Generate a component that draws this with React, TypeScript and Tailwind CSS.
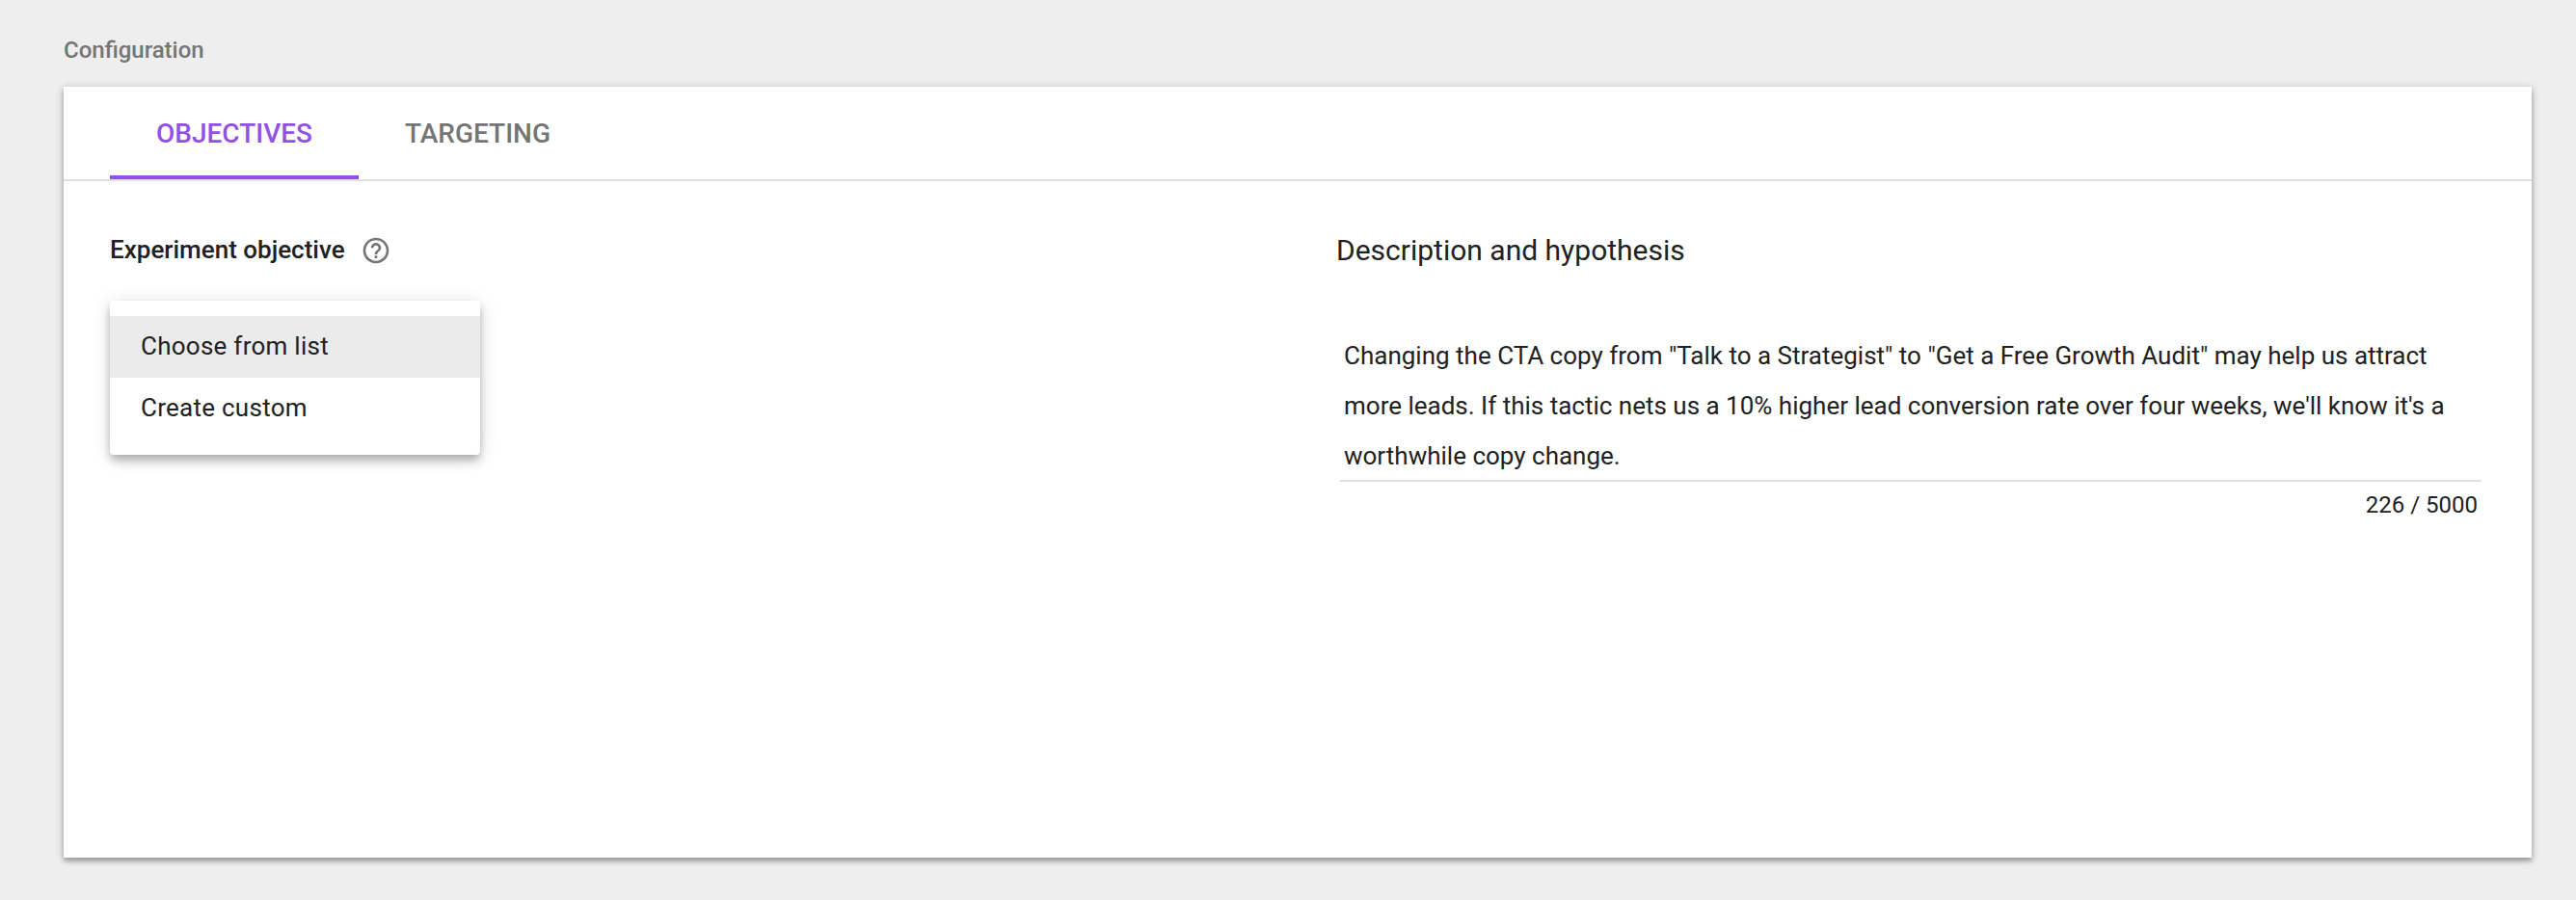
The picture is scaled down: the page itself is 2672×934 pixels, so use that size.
export default function App() {
  return (
    <div className="h-[934px] w-[2672px] bg-[#eeeeee] px-[66px] pt-[36px] font-['Roboto',sans-serif] text-[#212121]">
      <div className="mb-[22px] h-[32px] text-[24px] leading-[32px] font-medium text-[#757575]">Configuration</div>
      <div className="h-[800px] w-[2560px] bg-white shadow-[0_2px_8px_rgba(0,0,0,0.28),0_4px_4px_rgba(0,0,0,0.18)]">
        <nav className="flex h-[98px] border-b-2 border-[#e0e0e0] pl-[48px] text-[28px] leading-[98px] font-medium">
          <div className="h-[96px] w-[258px] border-b-4 border-[#9251e5] text-center text-[#9251e5]">OBJECTIVES</div>
          <div className="w-[247px] text-center text-[#757575]">TARGETING</div>
        </nav>
        <main className="flex pl-[48px]">
          <section className="w-[1272px] pt-[56px]">
            <div className="flex h-[32px] items-center gap-[16px]">
              <h2 className="pb-[2px] text-[26px] leading-[32px] font-medium">Experiment objective</h2>
              <svg className="size-[32px]" viewBox="0 0 24 24" fill="#757575"><path d="M11 18h2v-2h-2v2zm1-16C6.480 2 2 6.480 2 12s4.480 10 10 10 10-4.480 10-10S17.520 2 12 2zm0 18c-4.410 0-8-3.590-8-8s3.590-8 8-8 8 3.590 8 8-3.590 8-8 8zm0-14c-2.210 0-4 1.790-4 4h2c0-1.100.9-2 2-2s2 .9 2 2c0 2-3 1.750-3 5h2c0-2.250 3-2.500 3-5 0-2.210-1.790-4-4-4z" /></svg>
            </div>
            <div className="mt-[36px] h-[160px] w-[384px] rounded-[4px] bg-white pt-[16px] text-[26px] leading-[62px] tracking-[0.01em] shadow-[0_4px_8px_-2px_rgba(0,0,0,0.2),0_8px_10px_rgba(0,0,0,0.14),0_2px_20px_rgba(0,0,0,0.12)]">
              <div className="h-[64px] bg-[#ebebeb] pl-[32px]">Choose from list</div>
              <div className="h-[64px] pl-[32px]">Create custom</div>
            </div>
          </section>
          <section className="w-[1190px] pt-[56px]">
            <h2 className="text-[30px] leading-[32px]">Description and hypothesis</h2>
            <div className="mt-[67px] ml-[4px] h-[157px] w-[1184px] border-b-2 border-[#e0e0e0] pl-[4px] text-[26px] leading-[52px] whitespace-nowrap">
              <div>Changing the CTA copy from "Talk to a Strategist" to "Get a Free Growth Audit" may help us attract</div>
              <div>more leads. If this tactic nets us a 10% higher lead conversion rate over four weeks, we'll know it's a</div>
              <div>worthwhile copy change.</div>
            </div>
            <div className="mt-[8px] pr-[6px] text-right text-[24px] leading-[32px]">226 / 5000</div>
          </section>
        </main>
      </div>
    </div>
  );
}
